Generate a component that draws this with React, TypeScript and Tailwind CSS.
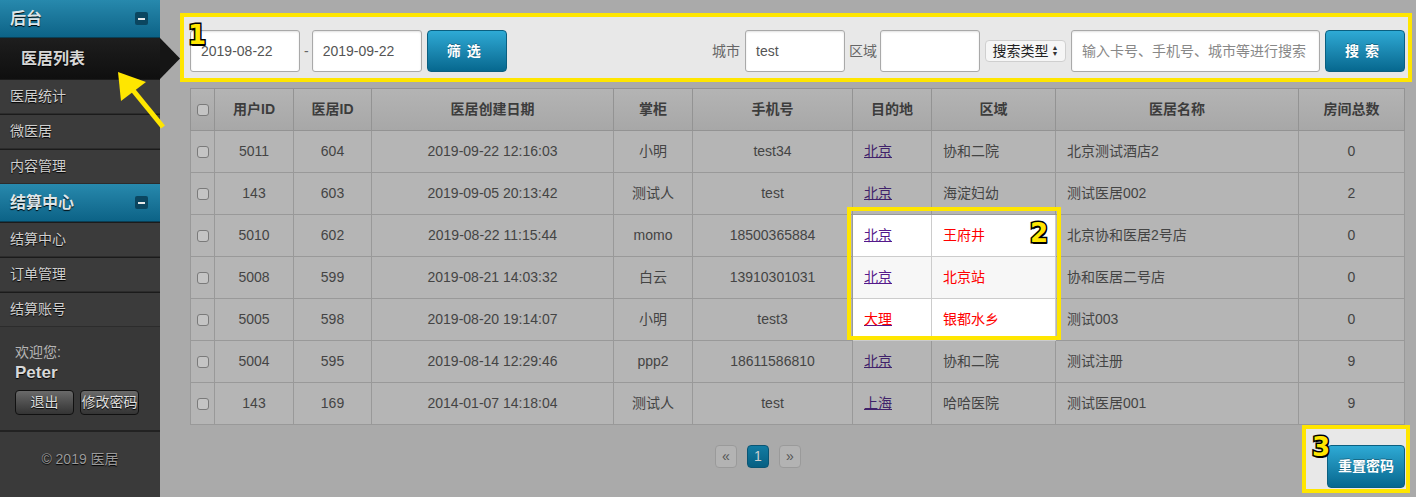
import type { ReactNode } from "react";

type Row = {
  uid: string;
  hid: string;
  created: string;
  owner: string;
  phone: string;
  city: string;
  area: string;
  name: string;
  rooms: string;
  lit?: boolean;
  alt?: boolean;
  redCity?: boolean;
};

const rows: Row[] = [
  { uid: "5011", hid: "604", created: "2019-09-22 12:16:03", owner: "小明", phone: "test34", city: "北京", area: "协和二院", name: "北京测试酒店2", rooms: "0" },
  { uid: "143", hid: "603", created: "2019-09-05 20:13:42", owner: "测试人", phone: "test", city: "北京", area: "海淀妇幼", name: "测试医居002", rooms: "2" },
  { uid: "5010", hid: "602", created: "2019-08-22 11:15:44", owner: "momo", phone: "18500365884", city: "北京", area: "王府井", name: "北京协和医居2号店", rooms: "0", lit: true },
  { uid: "5008", hid: "599", created: "2019-08-21 14:03:32", owner: "白云", phone: "13910301031", city: "北京", area: "北京站", name: "协和医居二号店", rooms: "0", lit: true, alt: true },
  { uid: "5005", hid: "598", created: "2019-08-20 19:14:07", owner: "小明", phone: "test3", city: "大理", area: "银都水乡", name: "测试003", rooms: "0", lit: true, redCity: true },
  { uid: "5004", hid: "595", created: "2019-08-14 12:29:46", owner: "ppp2", phone: "18611586810", city: "北京", area: "协和二院", name: "测试注册", rooms: "9" },
  { uid: "143", hid: "169", created: "2014-01-07 14:18:04", owner: "测试人", phone: "test", city: "上海", area: "哈哈医院", name: "测试医居001", rooms: "9" },
];

const font = "font-['Liberation_Sans','Noto_Sans_CJK_SC',sans-serif]";

function Badge({ n, className }: { n: string; className: string }) {
  return (
    <span
      className={`absolute font-['DejaVu_Sans',sans-serif] text-[26px] font-black leading-none text-[#ffe600] [-webkit-text-stroke:3px_#000] [paint-order:stroke_fill] [text-shadow:1px_2px_0_#000] ${className}`}
    >
      {n}
    </span>
  );
}

function SideHeader({ label }: { label: string }) {
  return (
    <div className="flex h-[38px] items-center justify-between border-b border-[#0a3f55] bg-gradient-to-b from-[#2789ad] to-[#0c6387] pl-[10px] pr-[12px]">
      <span className="text-[16px] font-bold text-[#dde6ea] [text-shadow:0_1px_1px_#000]">{label}</span>
      <span className="flex h-[13px] w-[13px] items-center justify-center rounded-[2px] bg-[#0b4660]">
        <span className="h-[2px] w-[7px] bg-[#e8e8e8]" />
      </span>
    </div>
  );
}

function SideItem({ label }: { label: string }) {
  return (
    <div className="flex h-[35px] items-center border-b border-t border-b-[#2c2c2c] border-t-[#1b1b1b] bg-[#3b3b3b] pl-[10px] text-[14px] text-[#cfcfcf] [text-shadow:0_1px_1px_#000]">
      {label}
    </div>
  );
}

function Input({ w, value, placeholder }: { w: string; value?: string; placeholder?: string }) {
  return (
    <div
      className={`flex h-[42px] items-center rounded-[3px] border border-[#a9a9a9] bg-white px-[10px] text-[14px] shadow-[inset_0_1px_2px_rgba(0,0,0,0.12)] ${w} ${value ? "text-[#555]" : "text-[#888]"}`}
    >
      {value ?? placeholder}
    </div>
  );
}

function BlueButton({ children, className = "" }: { children: ReactNode; className?: string }) {
  return (
    <div
      className={`flex items-center justify-center rounded-[4px] border border-[#0a5f80] bg-gradient-to-b from-[#2eaad5] to-[#06688f] text-[14px] font-bold text-white [text-shadow:0_-1px_0_rgba(0,0,0,0.3)] ${className}`}
    >
      {children}
    </div>
  );
}

function Check() {
  return <span className="inline-block h-[12px] w-[12px] rounded-[3px] border border-[#7a7a7a] bg-[#c4c4c4] align-middle" />;
}

export default function App() {
  const th = "border border-[#939393] text-[14px] font-bold text-[#3c3c3c]";
  const td = "border border-[#999] text-[14px] text-[#444]";
  return (
    <div className={`relative flex h-[497px] w-[1416px] overflow-hidden bg-[#aaaaaa] ${font}`}>
      {/* sidebar */}
      <aside className="relative z-10 flex w-[160px] shrink-0 flex-col bg-[#353535]">
        <SideHeader label="后台" />
        <div className="relative flex h-[41px] items-center bg-gradient-to-b from-[#1e1e1e] to-[#0f0f0f] pl-[21px] text-[16px] font-bold text-[#d6d6d6] [text-shadow:0_1px_1px_#000]">
          医居列表
          <span className="absolute right-[-20px] top-0 h-[41px] w-[20px] bg-[#151515] [clip-path:polygon(0_0,100%_50%,0_100%)]" />
        </div>
        <SideItem label="医居统计" />
        <SideItem label="微医居" />
        <SideItem label="内容管理" />
        <SideHeader label="结算中心" />
        <SideItem label="结算中心" />
        <SideItem label="订单管理" />
        <SideItem label="结算账号" />
        <div className="flex flex-col border-b-2 border-[#222] bg-[#383838] px-[15px] pb-[15px] pt-[15px]">
          <span className="text-[14px] leading-[20px] text-[#b5b5b5]">欢迎您:</span>
          <span className="text-[17px] font-bold leading-[22px] text-[#d8d8d8] [text-shadow:0_1px_1px_#000]">Peter</span>
          <div className="mt-[6px] flex gap-[6px]">
            <span className="flex h-[25px] w-[59px] items-center justify-center rounded-[4px] border border-[#111] bg-gradient-to-b from-[#6a6a6a] to-[#343434] text-[14px] text-[#ddd] [text-shadow:0_1px_1px_#000]">
              退出
            </span>
            <span className="flex h-[25px] w-[59px] items-center justify-center rounded-[4px] border border-[#111] bg-gradient-to-b from-[#6a6a6a] to-[#343434] text-[14px] text-[#ddd] [text-shadow:0_1px_1px_#000]">
              修改密码
            </span>
          </div>
        </div>
        <div className="flex flex-1 justify-center bg-[#3a3a3a] pt-[17px] text-[14px] text-[#9a9a9a] [text-shadow:0_1px_1px_#000]">
          © 2019 医居
        </div>
      </aside>

      {/* yellow pointer */}
      <svg className="absolute left-[110px] top-[65px] z-20" width="60" height="70" viewBox="0 0 60 70">
        <polygon points="8,7 36,17 11,36" fill="#ffe600" />
        <line x1="22" y1="24" x2="53" y2="62" stroke="#ffe600" strokeWidth="5" />
      </svg>

      {/* main */}
      <main className="flex flex-1 flex-col pl-[20px] pt-[13px]">
        <div className="relative flex h-[69px] w-[1232px] items-start border-4 border-[#ffe600] bg-[#e8e8e8] pl-[6px] pr-[3px] pt-[13px]">
          <Badge n="1" className="left-[4px] top-[5px]" />
          <Input w="w-[110px]" value="2019-08-22" />
          <span className="ml-[4px] mr-[3px] mt-[11px] text-[14px] text-[#666]">-</span>
          <Input w="w-[110px]" value="2019-09-22" />
          <BlueButton className="ml-[5px] h-[42px] w-[80px] tracking-[6px]">筛选</BlueButton>
          <div className="ml-auto flex items-center">
            <span className="mr-[5px] text-[14px] text-[#666]">城市</span>
            <Input w="w-[100px]" value="test" />
            <span className="ml-[4px] mr-[3px] text-[14px] text-[#666]">区域</span>
            <Input w="w-[100px]" />
            <span className="ml-[5px] flex h-[22px] w-[81px] items-center justify-center gap-[3px] rounded-[4px] border border-[#cfcfcf] bg-[#f6f6f6] text-[14px] text-[#222]">
              搜索类型
              <span className="flex flex-col text-[7px] leading-[6px] text-[#333]">
                <span>▲</span>
                <span>▼</span>
              </span>
            </span>
            <Input w="ml-[5px] w-[249px]" placeholder="输入卡号、手机号、城市等进行搜索" />
            <BlueButton className="ml-[5px] h-[42px] w-[80px] tracking-[6px]">搜索</BlueButton>
          </div>
        </div>

        <div className="relative ml-[10px] mt-[6px] w-[1214px]">
          <table className="w-[1214px] table-fixed border-collapse bg-[#b5b5b5] text-center">
            <colgroup>
              <col className="w-[24px]" />
              <col className="w-[79px]" />
              <col className="w-[78px]" />
              <col className="w-[242px]" />
              <col className="w-[79px]" />
              <col className="w-[160px]" />
              <col className="w-[79px]" />
              <col className="w-[124px]" />
              <col className="w-[243px]" />
              <col className="w-[106px]" />
            </colgroup>
            <thead>
              <tr className="h-[42px] bg-gradient-to-b from-[#b4b4b4] to-[#a7a7a7]">
                <th className={th}>
                  <Check />
                </th>
                <th className={th}>用户ID</th>
                <th className={th}>医居ID</th>
                <th className={th}>医居创建日期</th>
                <th className={th}>掌柜</th>
                <th className={th}>手机号</th>
                <th className={th}>目的地</th>
                <th className={th}>区域</th>
                <th className={th}>医居名称</th>
                <th className={th}>房间总数</th>
              </tr>
            </thead>
            <tbody>
              {rows.map((r, i) => {
                const lit = r.lit ? (r.alt ? "bg-[#f7f7f7] border-[#cccccc]" : "bg-white border-[#cccccc]") : "";
                return (
                  <tr key={i} className="h-[42px]">
                    <td className={td}>
                      <Check />
                    </td>
                    <td className={td}>{r.uid}</td>
                    <td className={td}>{r.hid}</td>
                    <td className={td}>{r.created}</td>
                    <td className={td}>{r.owner}</td>
                    <td className={td}>{r.phone}</td>
                    <td className={`${td} ${lit} pl-[11px] text-left`}>
                      <span
                        className={`underline ${r.redCity ? "text-[#f00] decoration-[#551a8b]" : r.lit ? "text-[#551a8b]" : "text-[#40226a]"}`}
                      >
                        {r.city}
                      </span>
                    </td>
                    <td className={`${td} ${lit} pl-[11px] text-left ${r.lit ? "text-[#f00]" : ""}`}>{r.area}</td>
                    <td className={`${td} pl-[11px] text-left`}>{r.name}</td>
                    <td className={td}>{r.rooms}</td>
                  </tr>
                );
              })}
            </tbody>
          </table>
          <div className="pointer-events-none absolute left-[657px] top-[119px] h-[133px] w-[214px] border-4 border-[#ffe600]" />
          <Badge n="2" className="left-[840px] top-[132px]" />
        </div>

        <div className="flex">
          <div className="ml-[535px] mt-[20px] flex h-[23px] gap-[10px] text-[14px]">
            <span className="flex h-[23px] w-[22px] items-center justify-center rounded-[4px] border border-[#9a9a9a] bg-[#b3b3b3] text-[#555]">«</span>
            <span className="flex h-[23px] w-[22px] items-center justify-center rounded-[4px] border border-[#0a5574] bg-gradient-to-b from-[#137ca3] to-[#075f82] text-[#cfcfcf]">1</span>
            <span className="flex h-[23px] w-[22px] items-center justify-center rounded-[4px] border border-[#9a9a9a] bg-[#b3b3b3] text-[#555]">»</span>
          </div>
          <div className="relative ml-auto mr-[6px] h-[68px] w-[108px] border-4 border-[#ffe600] bg-[#e8e8e8] pl-[21px] pt-[16px]">
            <Badge n="3" className="left-[6px] top-[5px]" />
            <BlueButton className="h-[43px] w-[78px]">重置密码</BlueButton>
          </div>
        </div>
      </main>
    </div>
  );
}
